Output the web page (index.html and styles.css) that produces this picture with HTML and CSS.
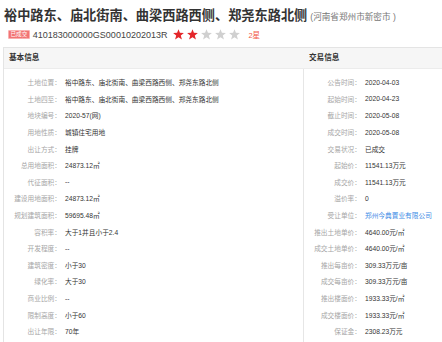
FILE: index.html
```html
<!DOCTYPE html>
<html lang="zh">
<head>
<meta charset="utf-8">
<link rel="stylesheet" href="styles.css">
</head>
<body>
<div class="head">
  <h1 class="title">裕中路东、庙北街南、曲梁西路西侧、郑尧东路北侧<span class="region">(河南省郑州市新密市 )</span></h1>
  <div class="meta">
    <span class="badge">已成交</span>
    <span class="code">410183000000GS00010202013R</span>
    <span class="stars">
      <svg class="star on" viewBox="0 0 10 10"><polygon points="5,0.2 6.3,3.5 9.9,3.7 7.1,6 8.1,9.6 5,7.6 1.9,9.6 2.9,6 0.1,3.7 3.7,3.5"/></svg>
      <svg class="star on" viewBox="0 0 10 10"><polygon points="5,0.2 6.3,3.5 9.9,3.7 7.1,6 8.1,9.6 5,7.6 1.9,9.6 2.9,6 0.1,3.7 3.7,3.5"/></svg>
      <svg class="star" viewBox="0 0 10 10"><polygon points="5,0.2 6.3,3.5 9.9,3.7 7.1,6 8.1,9.6 5,7.6 1.9,9.6 2.9,6 0.1,3.7 3.7,3.5"/></svg>
      <svg class="star" viewBox="0 0 10 10"><polygon points="5,0.2 6.3,3.5 9.9,3.7 7.1,6 8.1,9.6 5,7.6 1.9,9.6 2.9,6 0.1,3.7 3.7,3.5"/></svg>
      <svg class="star" viewBox="0 0 10 10"><polygon points="5,0.2 6.3,3.5 9.9,3.7 7.1,6 8.1,9.6 5,7.6 1.9,9.6 2.9,6 0.1,3.7 3.7,3.5"/></svg>
    </span>
    <span class="rank">2星</span>
  </div>
</div>
<div class="panel">
  <div class="panel-head">
    <div class="col-head col-left">基本信息</div>
    <div class="col-head col-right">交易信息</div>
  </div>
  <div class="panel-body">
    <div class="col col-left">
      <div class="row"><span class="k">土地位置：</span><span class="v">裕中路东、庙北街南、曲梁西路西侧、郑尧东路北侧</span></div>
      <div class="row"><span class="k">土地四至：</span><span class="v">裕中路东、庙北街南、曲梁西路西侧、郑尧东路北侧</span></div>
      <div class="row"><span class="k">地块编号：</span><span class="v">2020-57(网)</span></div>
      <div class="row"><span class="k">用地性质：</span><span class="v">城镇住宅用地</span></div>
      <div class="row"><span class="k">出让方式：</span><span class="v">挂牌</span></div>
      <div class="row"><span class="k">总用地面积：</span><span class="v">24873.12㎡</span></div>
      <div class="row"><span class="k">代征面积：</span><span class="v">--</span></div>
      <div class="row"><span class="k">建设用地面积：</span><span class="v">24873.12㎡</span></div>
      <div class="row"><span class="k">规划建筑面积：</span><span class="v">59695.48㎡</span></div>
      <div class="row"><span class="k">容积率：</span><span class="v">大于1并且小于2.4</span></div>
      <div class="row"><span class="k">开发程度：</span><span class="v">--</span></div>
      <div class="row"><span class="k">建筑密度：</span><span class="v">小于30</span></div>
      <div class="row"><span class="k">绿化率：</span><span class="v">大于30</span></div>
      <div class="row"><span class="k">商业比例：</span><span class="v">--</span></div>
      <div class="row"><span class="k">限制高度：</span><span class="v">小于60</span></div>
      <div class="row"><span class="k">出让年限：</span><span class="v">70年</span></div>
    </div>
    <div class="col col-right">
      <div class="row"><span class="k">公告时间：</span><span class="v">2020-04-03</span></div>
      <div class="row"><span class="k">起始时间：</span><span class="v">2020-04-23</span></div>
      <div class="row"><span class="k">截止时间：</span><span class="v">2020-05-08</span></div>
      <div class="row"><span class="k">成交时间：</span><span class="v">2020-05-08</span></div>
      <div class="row"><span class="k">交易状况：</span><span class="v">已成交</span></div>
      <div class="row"><span class="k">起始价：</span><span class="v">11541.13万元</span></div>
      <div class="row"><span class="k">成交价：</span><span class="v">11541.13万元</span></div>
      <div class="row"><span class="k">溢价率：</span><span class="v">0</span></div>
      <div class="row"><span class="k">受让单位：</span><span class="v link">郑州今典置业有限公司</span></div>
      <div class="row"><span class="k">推出土地单价：</span><span class="v">4640.00元/㎡</span></div>
      <div class="row"><span class="k">成交土地单价：</span><span class="v">4640.00元/㎡</span></div>
      <div class="row"><span class="k">推出每亩价：</span><span class="v">309.33万元/亩</span></div>
      <div class="row"><span class="k">成交每亩价：</span><span class="v">309.33万元/亩</span></div>
      <div class="row"><span class="k">推出楼面价：</span><span class="v">1933.33元/㎡</span></div>
      <div class="row"><span class="k">成交楼面价：</span><span class="v">1933.33元/㎡</span></div>
      <div class="row"><span class="k">保证金：</span><span class="v">2308.23万元</span></div>
    </div>
  </div>
</div>
</body>
</html>
```

FILE: styles.css
```css
* { box-sizing: border-box; }
html, body { margin: 0; padding: 0; background: #fff; }
body {
  font-family: "Liberation Sans", "Noto Sans CJK SC", sans-serif;
  color: #333;
  width: 442px;
  overflow: hidden;
}
.head { padding: 7px 0 0 4px; }
.title {
  margin: 0;
  font-size: 13.2px;
  line-height: 18px;
  font-weight: bold;
  color: #333;
  white-space: nowrap;
}
.region {
  font-size: 8.6px;
  font-weight: normal;
  color: #777;
  margin-left: 3px;
}
.meta {
  display: flex;
  align-items: center;
  height: 11px;
  margin-top: 3px;
  padding-left: 4px;
  white-space: nowrap;
}
.badge {
  display: inline-block;
  background: #f27474;
  border: 1px solid #f9b0b0;
  color: #fff;
  font-size: 5.6px;
  line-height: 7px;
  padding: 0 1.5px;
  border-radius: 1px;
}
.code {
  margin-left: 3px;
  font-size: 9px;
  line-height: 10px;
  color: #444;
}
.stars { display: flex; gap: 3px; margin-left: 6px; }
.star { width: 11px; height: 11px; display: block; fill: #d0d0d0; }
.star.on { fill: #e4262a; }
.rank {
  margin-left: 8px;
  font-size: 7.5px;
  color: #f25a4a;
}
.panel {
  margin: 7px 0 0 3px;
  border-top: 1px solid #e4e4e4;
  border-left: 1px solid #e4e4e4;
}
.panel-head {
  display: flex;
  height: 21px;
  background: #f6f6f6;
  border-bottom: 1px solid #ececec;
}
.col-head {
  font-size: 7.6px;
  font-weight: bold;
  line-height: 20px;
  color: #333;
  padding-left: 5px;
}
.col-left { width: 300px; flex: none; }
.col-right { flex: 1; }
.panel-body { display: flex; }
.col { padding-top: 5px; }
.col.col-left { border-right: 1px solid #e6e6e6; padding-bottom: 20px; }
.row {
  display: flex;
  height: 16.6px;
  align-items: center;
  font-size: 6.7px;
  white-space: nowrap;
}
.k {
  width: 57px;
  flex: none;
  text-align: right;
  color: #a6a6a6;
}
.v { margin-left: 4px; color: #333; }
.v.link { color: #3f8de6; }
```
